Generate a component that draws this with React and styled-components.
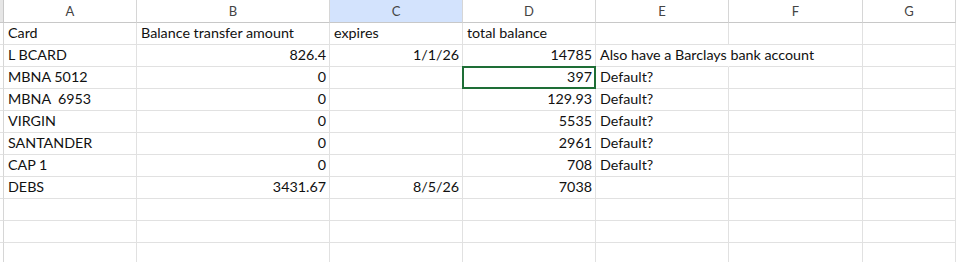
import React from "react";
import styled, { createGlobalStyle } from "styled-components";

const GlobalStyle = createGlobalStyle`
  html, body {
    margin: 0;
    padding: 0;
    background: #ffffff;
  }
  body {
    font-family: Lato, "Open Sans", "Liberation Sans", sans-serif;
  }
`;

const columns = ["A", "B", "C", "D", "E", "F", "G"];
const selectedCol = "C";

const rows = [
  ["Card", "Balance transfer amount", "expires", "total balance", "", "", ""],
  ["L BCARD", 826.4, "1/1/26", 14785, "Also have a Barclays bank account", "", ""],
  ["MBNA 5012", 0, "", 397, "Default?", "", ""],
  ["MBNA  6953", 0, "", 129.93, "Default?", "", ""],
  ["VIRGIN", 0, "", 5535, "Default?", "", ""],
  ["SANTANDER", 0, "", 2961, "Default?", "", ""],
  ["CAP 1", 0, "", 708, "Default?", "", ""],
  ["DEBS", 3431.67, "8/5/26", 7038, "", "", ""],
  ["", "", "", "", "", "", ""],
  ["", "", "", "", "", "", ""],
  ["", "", "", "", "", "", ""],
];

const activeCell = { row: 2, col: 3 };
const dateLike = (v) => typeof v === "string" && /^\d+\/\d+\/\d+$/.test(v);

const Sheet = styled.div`
  display: grid;
  grid-template-columns: 4px 133px 193px 133px 133px 133px 134px 1fr;
  grid-template-rows: 23px repeat(11, 22px);
  width: 956px;
  height: 262px;
  overflow: hidden;
  color: #111;
  font-size: 14.3px;
`;

const Corner = styled.div`
  background: #e6e6e6;
  border-right: 1px solid #c8c8c8;
  border-bottom: 1px solid #c8c8c8;
`;

const ColHeader = styled.div`
  display: flex;
  align-items: center;
  justify-content: center;
  background: ${(p) => (p.$selected ? "#d3e3fd" : "#ffffff")};
  color: #444;
  font-size: 13px;
  border-right: 1px solid #d6d6d6;
  border-bottom: 1px solid #c8c8c8;
`;

const RowHeader = styled.div`
  background: #ffffff;
  border-right: 1px solid #d6d6d6;
  border-bottom: 1px solid #e1e1e1;
`;

const Cell = styled.div`
  position: relative;
  display: flex;
  align-items: flex-end;
  justify-content: ${(p) => (p.$right ? "flex-end" : "flex-start")};
  padding: 0 ${(p) => (p.$right ? "3px" : "0")} 1px ${(p) => (p.$right ? "0" : "4px")};
  white-space: pre;
  overflow: visible;
  line-height: 20px;
  border-right: 1px solid ${(p) => (p.$spill ? "transparent" : "#e1e1e1")};
  border-bottom: 1px solid #e1e1e1;
  z-index: ${(p) => (p.$spill ? 1 : 0)};
`;

const ActiveBox = styled.div`
  position: absolute;
  left: -1px;
  top: -1px;
  right: -1px;
  bottom: -1px;
  border: 2px solid #1e6e36;
  pointer-events: none;
`;

export default function App() {
  return (
    <>
      <GlobalStyle />
      <Sheet>
        <Corner />
        {columns.map((c) => (
          <ColHeader key={c} $selected={c === selectedCol}>
            {c}
          </ColHeader>
        ))}
        {rows.map((r, ri) => (
          <React.Fragment key={ri}>
            <RowHeader />
            {r.map((v, ci) => {
              const right = typeof v === "number" || dateLike(v);
              const spill = ci === 4 && typeof v === "string" && v.length > 16;
              const active = ri === activeCell.row && ci === activeCell.col;
              return (
                <Cell key={ci} $right={right} $spill={spill}>
                  {v === "" ? null : String(v)}
                  {active && <ActiveBox />}
                </Cell>
              );
            })}
          </React.Fragment>
        ))}
      </Sheet>
    </>
  );
}
